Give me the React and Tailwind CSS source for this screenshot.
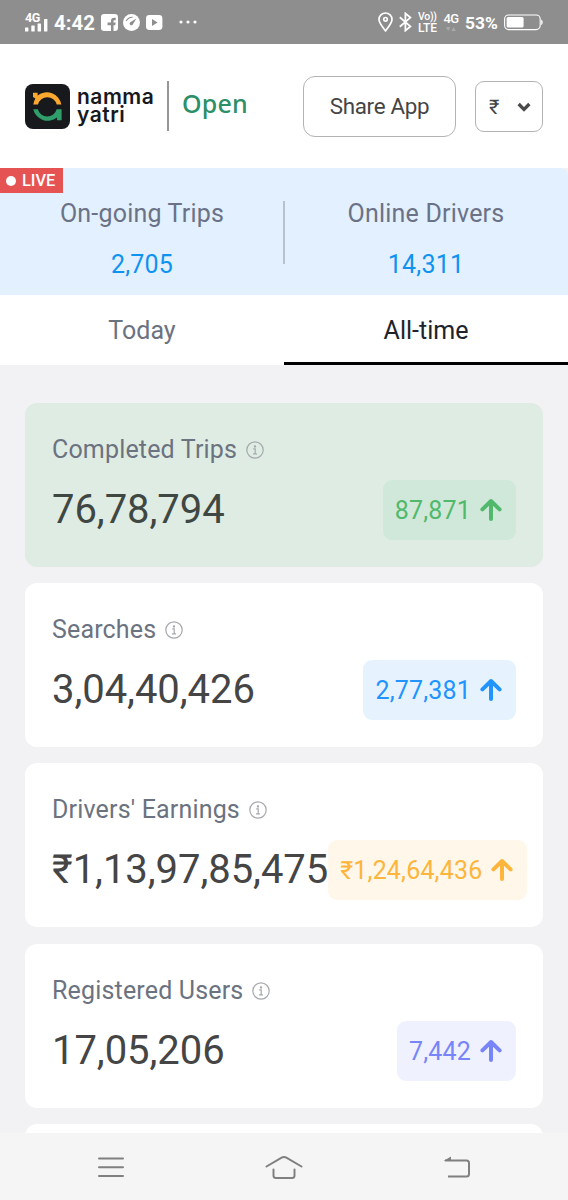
import React, { useState } from 'react';

const stats = [
  {
    title: 'Completed Trips',
    value: '76,78,794',
    change: '87,871',
    card: 'bg-[#dfece3]',
    pill: 'bg-[#d0e8d9] text-[#50b96c]',
    valueColor: 'text-[#3f4742]',
  },
  {
    title: 'Searches',
    value: '3,04,40,426',
    change: '2,77,381',
    card: 'bg-white',
    pill: 'bg-[#e6f3ff] text-[#2194ff]',
    valueColor: 'text-[#454545]',
  },
  {
    title: "Drivers' Earnings",
    value: '₹1,13,97,85,475',
    change: '₹1,24,64,436',
    card: 'bg-white',
    pill: 'bg-[#fff7ea] text-[#fdb53c]',
    valueColor: 'text-[#454545]',
  },
  {
    title: 'Registered Users',
    value: '17,05,206',
    change: '7,442',
    card: 'bg-white',
    pill: 'bg-[#eff1ff] text-[#7885f8]',
    valueColor: 'text-[#454545]',
  },
];

const StatusBar = () => (
  <div className="h-11 shrink-0 bg-[#8e8e8e] text-white flex items-center justify-between pl-[25px] pr-[25px]">
    <div className="flex items-center">
      {/* Signal */}
      <div className="w-[23px] flex flex-col">
        <span className="text-[12.5px] leading-[11px] font-bold tracking-[-0.4px]">4G</span>
        <svg width="23" height="9" viewBox="0 0 23 9" fill="currentColor" className="overflow-visible">
          <rect x="0" y="4.5" width="3.4" height="4" rx="0.6" />
          <rect x="6.3" y="2.5" width="3.4" height="6" rx="0.6" />
          <rect x="12.6" y="0.5" width="3.4" height="8" rx="0.6" />
          <rect x="19" y="-4" width="3.4" height="12.5" rx="0.6" />
        </svg>
      </div>
      <span className="ml-1.5 w-[46px] pt-0.5 text-[20.4px] leading-6 font-bold">4:42</span>
      <svg className="ml-px" width="17" height="17" viewBox="0 0 17 17">
        <rect width="17" height="17" rx="3.2" fill="white" />
        <path d="M10 17v-5.8H6.6V8.5H10V7c0-2 1.2-3.2 3.2-3.2h1.5v2.4h-1.2c-.8 0-1 .4-1 1.1v1.2h2.2l-.4 2.7h-1.8V17" fill="#8e8e8e" />
      </svg>
      <svg className="ml-[5px]" width="17" height="17" viewBox="0 0 17 17">
        <circle cx="8.5" cy="8.5" r="8.5" fill="white" />
        <path d="M3.2 7C4.8 4 7 3 9.6 3.2" fill="none" stroke="#8e8e8e" strokeWidth="1.1" />
        <path d="M13.4 4.6L9.9 10.2a1.7 1.7 0 1 1-2.2-2.2z" fill="#8e8e8e" />
      </svg>
      <svg className="ml-1.5" width="17" height="15" viewBox="0 0 17 15">
        <rect width="16.4" height="15" rx="3.4" fill="white" />
        <path d="M6 4l5.6 3.5L6 11z" fill="#8e8e8e" />
      </svg>
      <svg className="ml-4" width="18" height="4" viewBox="0 0 18 4" fill="white">
        <circle cx="2" cy="2" r="1.6" />
        <circle cx="9" cy="2" r="1.6" />
        <circle cx="16" cy="2" r="1.6" />
      </svg>
    </div>

    <div className="flex items-center">
      <svg width="15" height="20" viewBox="0 0 15 20" fill="none" stroke="white" strokeWidth="1.7">
        <path d="M7.5 18.8C4.2 14.6 1 10.9 1 7.5a6.5 6.5 0 0 1 13 0c0 3.4-3.2 7.1-6.5 11.3z" />
        <circle cx="7.5" cy="7.3" r="1.8" />
      </svg>
      <svg className="ml-1.5" width="13" height="20" viewBox="0 0 13 20" fill="none" stroke="white" strokeWidth="1.8">
        <path d="M.8 5.2l10.6 9.2L6.4 18.6V1.4l5 4.2L.8 14.8" />
      </svg>
      <div className="ml-1.5 w-[21px] flex flex-col font-medium">
        <span className="text-[10.5px] leading-[11px] whitespace-nowrap tracking-[-0.3px]">Vo))</span>
        <span className="text-[12px] leading-[12px]">LTE</span>
      </div>
      <div className="ml-1 w-4 flex flex-col items-center">
        <span className="text-[13px] leading-[12px] font-medium tracking-[-0.6px]">4G</span>
        <svg width="10" height="7" viewBox="0 0 10 7" fill="#a9a9a9">
          <path d="M0 2h4.4L2.2 6zM5.4 6h4.4L7.6 2z" />
        </svg>
      </div>
      <span className="ml-1.5 w-[33px] pt-0.5 text-[17.4px] leading-6 font-bold">53%</span>
      <svg className="ml-1.5" width="39" height="17" viewBox="0 0 39 17">
        <rect x=".6" y="1" width="35.6" height="14.6" rx="4" fill="none" stroke="white" strokeWidth="1.1" />
        <rect x="2.6" y="3" width="17" height="10.6" rx="1.6" fill="white" />
        <path d="M37.2 5.4c2 1.2 2 4.6 0 5.8z" fill="white" />
      </svg>
    </div>
  </div>
);

const Logo = () => (
  <svg width="45" height="45" viewBox="0 0 45 45">
    <rect width="45" height="45" rx="8" fill="#17191d" />
    <path d="M8 8.8h4.6v2.6A15 15 0 0 1 36.4 20.6h-4.7A9.6 9.6 0 0 0 13 20.6H8.3A14 14 0 0 1 10.4 14.4L8 13z" fill="#fba82f" />
    <path d="M36.6 36.2H32v-2.6A15 15 0 0 1 8.2 25.2H12.9A9.6 9.6 0 0 0 31.6 25.2h5z" fill="#2f9e6b" />
  </svg>
);

const Header = () => (
  <header className="h-[124px] shrink-0 bg-white flex items-center pl-[25px] pr-[25px]">
    <Logo />
    <div className="ml-[7px] w-[83px] font-['Inter',sans-serif] font-semibold text-[21px] leading-[18px] tracking-[0.5px] text-[#17191d]">
      <div>namma</div>
      <div>yatri</div>
    </div>
    <div className="ml-[7px] w-0.5 h-[50px] bg-[#969696]" />
    <span className="ml-[13px] w-[66px] font-['Noto_Sans',sans-serif] font-medium text-[25px] leading-9 tracking-[0.2px] text-[#2c8f68] -mt-1.5">Open</span>
    <button className="ml-auto w-[153px] h-[61px] shrink-0 rounded-[12px] border-[1.5px] border-[#b3b3b3] pt-0.5 text-[22.4px] tracking-[-0.3px] text-[#454545]">
      Share App
    </button>
    <button className="ml-[19px] w-[68px] h-[51px] mt-px shrink-0 rounded-[9px] border-[1.5px] border-[#b3b3b3] flex items-center justify-between pl-[13px] pr-[11px] text-[20px] text-[#454545]">
      ₹
      <svg width="14" height="10" viewBox="0 0 15 11" fill="none" stroke="#4a4a4a" strokeWidth="3.6">
        <path d="M1.6 2.2l5.9 5.9 5.9-5.9" />
      </svg>
    </button>
  </header>
);

const LivePanel = () => (
  <section className="relative h-[127px] shrink-0 bg-[#e2f0ff] rounded-tr-[8px] flex">
    <div className="absolute left-0 top-0 w-[63px] h-[25px] bg-[#e55353] text-white flex items-center gap-1.5 pl-1.5 pt-0.5 text-[16.4px] font-medium">
      <span className="size-[10px] rounded-full bg-white -mt-0.5" />
      LIVE
    </div>
    <div className="flex-1 flex flex-col items-center pt-[31px] tracking-[0.2px]">
      <span className="text-[25px] leading-[30px] text-[#6b7286]">On-going Trips</span>
      <span className="mt-[21px] text-[25px] leading-[30px] text-[#0f93f1]">2,705</span>
    </div>
    <div className="w-0.5 h-[63px] mt-[33px] -mx-px bg-[#b9c1cb]" />
    <div className="flex-1 flex flex-col items-center pt-[31px] tracking-[0.2px]">
      <span className="text-[25px] leading-[30px] text-[#6b7286]">Online Drivers</span>
      <span className="mt-[21px] text-[25px] leading-[30px] text-[#0f93f1]">14,311</span>
    </div>
  </section>
);

const InfoIcon = () => (
  <svg width="18" height="18" viewBox="0 0 18 18" fill="none" stroke="#a5a9ae" strokeWidth="1.2">
    <circle cx="9" cy="9" r="8.2" />
    <path d="M7.2 7.8h2v4.6M7 12.8h4" />
    <circle cx="9" cy="5.4" r=".6" fill="#a5a9ae" />
  </svg>
);

const StatCard = ({ stat }) => (
  <div className={`h-[164px] shrink-0 rounded-[12px] px-[27px] pt-8 ${stat.card}`}>
    <div className="flex items-center gap-[9px] h-[30px]">
      <span className="text-[25px] leading-[30px] tracking-[0.17px] text-[#6b7280]">{stat.title}</span>
      <InfoIcon />
    </div>
    <div className="mt-[15px] flex items-center justify-between">
      <span className={`text-[40px] leading-[60px] tracking-[-0.05px] shrink-0 ${stat.valueColor}`}>{stat.value}</span>
      <div className={`h-[60px] shrink-0 rounded-[9px] pl-3 pr-[14px] flex items-center gap-[9px] ${stat.pill}`}>
        <span className="pt-0.5 text-[25px] leading-[30px] tracking-[0.17px]">{stat.change}</span>
        <svg width="22" height="24" viewBox="0 0 22 24" fill="none" stroke="currentColor" strokeWidth="4" strokeLinecap="round" strokeLinejoin="round">
          <path d="M11 21V3M2.4 11.4L11 3l8.6 8.4" />
        </svg>
      </div>
    </div>
  </div>
);

const NavBar = () => (
  <nav className="h-[67px] shrink-0 bg-[#f5f5f5] flex items-center justify-between pl-[98px] pr-[97px] pt-0.5">
    <svg width="26" height="22" viewBox="0 0 26 22" stroke="#808080" strokeWidth="2" strokeLinecap="round">
      <path d="M1 1.5h24M1 10.2h24M1 19h24" />
    </svg>
    <svg width="38" height="26" viewBox="0 0 38 26" fill="none" stroke="#808080" strokeWidth="2" strokeLinecap="round" strokeLinejoin="round">
      <path d="M1.5 11.5L16.2 2.8Q19 1.2 21.8 2.8L36.5 11.5M8.5 14.5v6q0 2.5 2.5 2.5h16q2.5 0 2.5-2.5v-6" />
    </svg>
    <svg width="28" height="24" viewBox="0 0 28 24" fill="none" stroke="#808080" strokeWidth="2">
      <path d="M2 4.5h21.5q2.5 0 2.5 2.5v11q0 2.5-2.5 2.5H5" />
      <path d="M.5 5L8 .5V5z" fill="#808080" stroke="none" />
    </svg>
  </nav>
);

const App = () => {
  const [activeTab, setActiveTab] = useState('All-time');

  return (
    <div className="w-[568px] h-[1200px] overflow-hidden flex flex-col bg-[#f2f2f5] font-['Roboto',sans-serif]">
      <StatusBar />
      <Header />
      <LivePanel />

      {/* Tabs */}
      <div className="h-[70px] shrink-0 bg-white grid grid-cols-2">
        {['Today', 'All-time'].map((tab) => (
          <button
            key={tab}
            onClick={() => setActiveTab(tab)}
            className={`pt-1 text-[25px] border-b-[3px] ${
              activeTab === tab ? 'text-[#20232b] border-black' : 'text-[#6b7280] border-transparent'
            }`}
          >
            {tab}
          </button>
        ))}
      </div>

      {/* Cards */}
      <main className="flex-1 min-h-0 overflow-hidden flex flex-col gap-[16.2px] px-[25px] pt-[38px]">
        {stats.map((stat) => (
          <StatCard key={stat.title} stat={stat} />
        ))}
        <div className="h-[164px] shrink-0 rounded-[12px] bg-white" />
      </main>

      <NavBar />
    </div>
  );
};

export default App;
